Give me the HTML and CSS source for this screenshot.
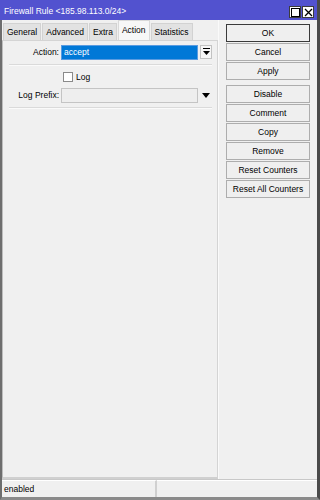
FILE: index.html
```html
<!DOCTYPE html>
<html lang="en">
<head>
  <meta charset="UTF-8" />
  <title>Firewall Rule</title>
  <link rel="stylesheet" href="styles.css">
</head>
<body>
  <div class="window">
    <div class="titlebar">
      <span class="title">Firewall Rule &lt;185.98.113.0/24&gt;</span>
      <div class="title-btns">
        <div class="tbtn">
          <svg width="9" height="9" viewBox="0 0 9 9"><rect x="0.5" y="0.5" width="8" height="8" fill="none" stroke="#000"/></svg>
        </div>
        <div class="tbtn">
          <svg width="9" height="9" viewBox="0 0 9 9"><path d="M1 1L8 8M8 1L1 8" stroke="#000" stroke-width="1.3"/></svg>
        </div>
      </div>
    </div>
    <div class="main">
      <div class="left">
        <div class="tabs">
          <div class="tab">General</div>
          <div class="tab">Advanced</div>
          <div class="tab">Extra</div>
          <div class="tab active">Action</div>
          <div class="tab">Statistics</div>
        </div>
        <div class="panel">
          <div class="row">
            <label class="lbl">Action:</label>
            <div class="select">accept</div>
            <div class="combo-btn">
              <svg width="7" height="8" viewBox="0 0 7 8"><rect x="0" y="0" width="7" height="1" fill="#000"/><path d="M0 3H7L3.5 7Z" fill="#000"/></svg>
            </div>
          </div>
          <div class="sep"></div>
          <div class="row check-row">
            <span class="checkbox"></span>
            <span>Log</span>
          </div>
          <div class="row">
            <label class="lbl">Log Prefix:</label>
            <div class="input"></div>
            <div class="arrow">
              <svg width="8" height="5" viewBox="0 0 8 5"><path d="M0 0H8L4 5Z" fill="#000"/></svg>
            </div>
          </div>
          <div class="sep"></div>
        </div>
      </div>
      <div class="buttons">
        <div class="btn default">OK</div>
        <div class="btn">Cancel</div>
        <div class="btn">Apply</div>
        <div class="btn group-start">Disable</div>
        <div class="btn">Comment</div>
        <div class="btn">Copy</div>
        <div class="btn">Remove</div>
        <div class="btn">Reset Counters</div>
        <div class="btn">Reset All Counters</div>
      </div>
    </div>
    <div class="statusbar">
      <div class="cell first">enabled</div>
      <div class="cell"></div>
    </div>
  </div>
</body>
</html>
```

FILE: styles.css
```css
* {
  margin: 0;
  padding: 0;
  box-sizing: border-box;
}
body {
  width: 320px;
  height: 500px;
  background: #fff;
  font-family: 'Liberation Sans', Arial, sans-serif;
  font-size: 8.5px;
  color: #000;
  overflow: hidden;
}
.window {
  width: 320px;
  height: 500px;
  display: flex;
  flex-direction: column;
  background: #f0f0f0;
  border-left: 2px solid #6e6e6e;
  border-right: 3px solid #4a4a4a;
  border-bottom: 3px solid #8a8a8a;
}
.titlebar {
  height: 20px;
  margin-left: -2px;
  background: #5252cf;
  display: flex;
  align-items: center;
  justify-content: space-between;
  padding: 0 3px 0 4px;
  color: #fff;
}
.title {
  font-size: 8.5px;
  padding-top: 1px;
}
.title-btns {
  display: flex;
  gap: 1px;
  margin-top: 4px;
}
.tbtn {
  width: 12px;
  height: 12px;
  background: #fff;
  border: 1px solid #3c3c3c;
  display: flex;
  align-items: center;
  justify-content: center;
}
.main {
  flex: 1;
  display: flex;
}
.left {
  width: 216px;
  display: flex;
  flex-direction: column;
}
.tabs {
  display: flex;
  gap: 1px;
  padding: 2px 0 0 1px;
  height: 20px;
  align-items: flex-end;
}
.tab {
  height: 17px;
  padding: 0 3px;
  line-height: 16px;
  background: #e2e2e2;
  border: 1px solid #d2d2d2;
  border-bottom: none;
}
.tab.active {
  height: 20px;
  line-height: 18px;
  background: #f7f7f7;
  border-color: #d9d9d9;
}
.panel {
  flex: 1;
  border: 1px solid #d4d4d4;
  border-left-color: #bdbdbd;
  border-bottom: 2px solid #d0d0d0;
  padding: 3px 5px 0 5px;
  background: #f0f0f0;
}
.row {
  display: flex;
  align-items: center;
  height: 16px;
}
.lbl {
  width: 53px;
  text-align: right;
  padding-right: 2px;
  flex-shrink: 0;
}
.select {
  width: 137px;
  height: 15px;
  background: #0078d7;
  color: #fff;
  border: 1px solid #5a9be0;
  padding-left: 2px;
  line-height: 13px;
}
.combo-btn {
  width: 12px;
  height: 14px;
  margin-left: 2px;
  border: 1px solid #c2c2c2;
  background: #f6f6f6;
  display: flex;
  align-items: center;
  justify-content: center;
}
.sep {
  height: 2px;
  margin: 4px 0 5px 1px;
  background: #dadada;
  border-bottom: 1px solid #fafafa;
}
.check-row {
  padding-left: 55px;
  gap: 3px;
  height: 11px;
  margin-bottom: 5px;
}
.checkbox {
  width: 10px;
  height: 10px;
  background: #fff;
  border: 1px solid #8a8a8a;
}
.input {
  width: 137px;
  height: 15px;
  background: #eeeeee;
  border: 1px solid #c4c4c4;
}
.arrow {
  width: 13px;
  display: flex;
  justify-content: center;
  padding-left: 2px;
}
.buttons {
  flex: 1;
  display: flex;
  flex-direction: column;
  gap: 1px;
  padding: 4px 0 0 7px;
  border-left: 1px solid #fafafa;
}
.btn {
  width: 84px;
  height: 18px;
  line-height: 16px;
  text-align: center;
  background: #efefef;
  border: 1px solid #adadad;
}
.btn.default {
  border: 1px solid #3a3a3a;
}
.btn.group-start {
  margin-top: 4px;
}
.statusbar {
  height: 18px;
  display: flex;
  border-top: 1px solid #c8c8c8;
}
.cell {
  flex: 1;
  border-top: 1px solid #fff;
  padding: 2px 2px;
  line-height: 12px;
}
.cell.first {
  flex: 0 0 155px;
  border-right: 2px solid #d0d0d0;
}
```
